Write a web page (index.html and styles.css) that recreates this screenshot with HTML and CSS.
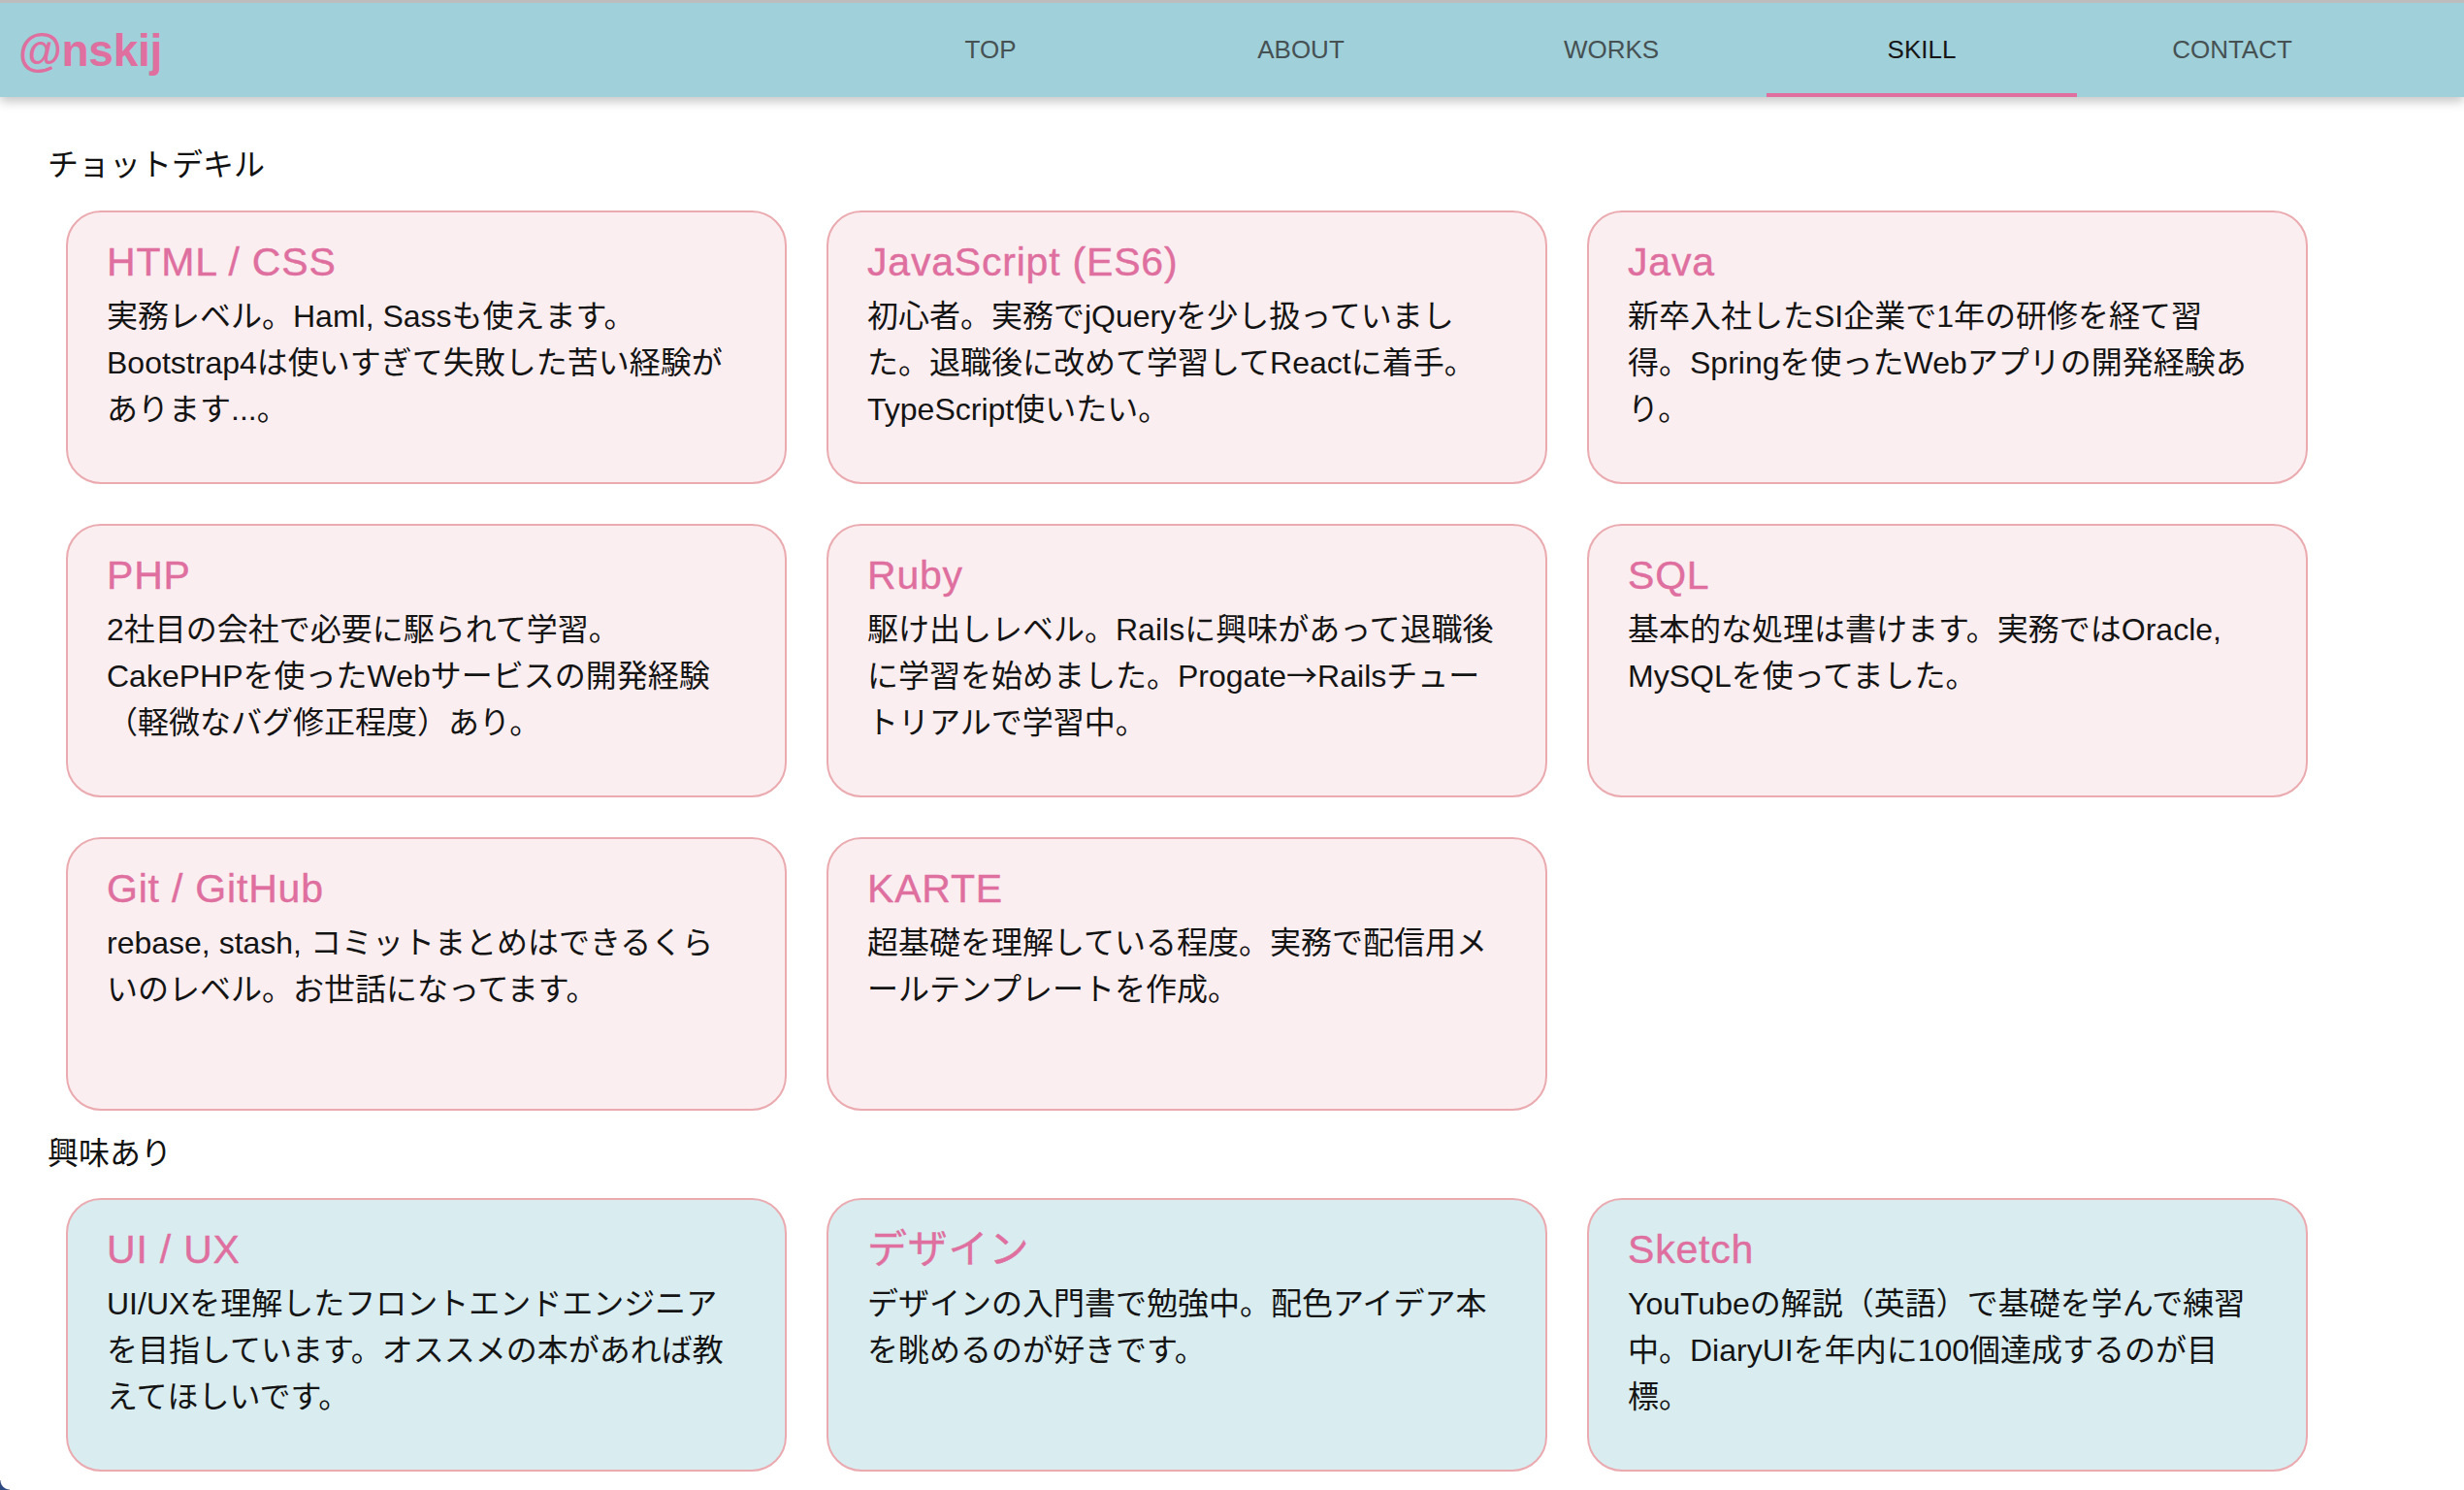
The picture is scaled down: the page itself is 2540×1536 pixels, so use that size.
FILE: index.html
```html
<!DOCTYPE html>
<html lang="ja">
<head>
<meta charset="utf-8">
<title>@nskij - SKILL</title>
<link rel="stylesheet" href="styles.css">
</head>
<body>
<header class="header">
  <div class="logo">@nskij</div>
  <nav class="nav">
    <a class="nav-item">TOP</a>
    <a class="nav-item">ABOUT</a>
    <a class="nav-item">WORKS</a>
    <a class="nav-item active">SKILL</a>
    <a class="nav-item">CONTACT</a>
  </nav>
</header>
<main class="main">
  <h2 class="label">チョットデキル</h2>
  <div class="grid">
    <div class="card">
      <h3 class="card-title">HTML / CSS</h3>
      <p class="card-text">実務レベル。Haml, Sassも使えます。<br>Bootstrap4は使いすぎて失敗した苦い経験が<br>あります...。</p>
    </div>
    <div class="card">
      <h3 class="card-title">JavaScript (ES6)</h3>
      <p class="card-text">初心者。実務でjQueryを少し扱っていまし<br>た。退職後に改めて学習してReactに着手。<br>TypeScript使いたい。</p>
    </div>
    <div class="card">
      <h3 class="card-title">Java</h3>
      <p class="card-text">新卒入社したSI企業で1年の研修を経て習<br>得。Springを使ったWebアプリの開発経験あ<br>り。</p>
    </div>
    <div class="card">
      <h3 class="card-title">PHP</h3>
      <p class="card-text">2社目の会社で必要に駆られて学習。<br>CakePHPを使ったWebサービスの開発経験<br>（軽微なバグ修正程度）あり。</p>
    </div>
    <div class="card">
      <h3 class="card-title">Ruby</h3>
      <p class="card-text">駆け出しレベル。Railsに興味があって退職後<br>に学習を始めました。Progate<span class="cjk">→</span>Railsチュー<br>トリアルで学習中。</p>
    </div>
    <div class="card">
      <h3 class="card-title">SQL</h3>
      <p class="card-text">基本的な処理は書けます。実務ではOracle,<br>MySQLを使ってました。</p>
    </div>
    <div class="card">
      <h3 class="card-title">Git / GitHub</h3>
      <p class="card-text">rebase, stash, コミットまとめはできるくら<br>いのレベル。お世話になってます。</p>
    </div>
    <div class="card">
      <h3 class="card-title">KARTE</h3>
      <p class="card-text">超基礎を理解している程度。実務で配信用メ<br>ールテンプレートを作成。</p>
    </div>
  </div>
  <h2 class="label second">興味あり</h2>
  <div class="grid">
    <div class="card interest">
      <h3 class="card-title">UI / UX</h3>
      <p class="card-text">UI/UXを理解したフロントエンドエンジニア<br>を目指しています。オススメの本があれば教<br>えてほしいです。</p>
    </div>
    <div class="card interest">
      <h3 class="card-title">デザイン</h3>
      <p class="card-text">デザインの入門書で勉強中。配色アイデア本<br>を眺めるのが好きです。</p>
    </div>
    <div class="card interest">
      <h3 class="card-title">Sketch</h3>
      <p class="card-text">YouTubeの解説（英語）で基礎を学んで練習<br>中。DiaryUIを年内に100個達成するのが目<br>標。</p>
    </div>
  </div>
</main>
<div class="window-corner"></div>
</body>
</html>
```
FILE: styles.css
```css
* {
  box-sizing: border-box;
}

html,
body {
  margin: 0;
  padding: 0;
}

body {
  width: 2540px;
  height: 1536px;
  overflow: hidden;
  position: relative;
  background: #ffffff;
  border-top: 3px solid #bdbdbd;
  font-family: "Liberation Sans", "Noto Sans CJK JP", sans-serif;
  color: #141414;
}

.header {
  position: relative;
  z-index: 1;
  display: flex;
  align-items: center;
  height: 97px;
  background: #a0d0da;
  box-shadow: 0 5px 10px rgba(0, 0, 0, 0.22);
}

.logo {
  margin-left: 19px;
  font-size: 46px;
  font-weight: bold;
  letter-spacing: -0.3px;
  color: #de6f9f;
}

.nav {
  display: flex;
  height: 100%;
  margin-left: auto;
  margin-right: 79px;
}

.nav-item {
  position: relative;
  display: flex;
  align-items: center;
  justify-content: center;
  width: 320px;
  font-size: 26px;
  color: #465153;
}

.nav-item.active {
  color: #161616;
}

.nav-item.active::after {
  content: "";
  position: absolute;
  left: 0;
  right: 0;
  bottom: 0;
  height: 4px;
  background: #de6f9f;
}

.main {
  padding: 46px 0 0 49px;
}

.label {
  margin: 0 0 23px;
  font-size: 32px;
  line-height: 48px;
  font-weight: normal;
  color: #111111;
}

.label.second {
  margin-top: 20px;
  margin-bottom: 22px;
}

.grid {
  display: grid;
  grid-template-columns: repeat(3, 743px);
  gap: 41px;
  margin-left: 19px;
}

.card {
  height: 282px;
  padding: 27px 40px 0;
  border: 2px solid #eaaaaf;
  border-radius: 36px;
  background: #fbeef0;
}

.card.interest {
  background: #d9ecf0;
}

.card-title {
  margin: 0;
  font-size: 41px;
  line-height: 48px;
  font-weight: normal;
  letter-spacing: 0.8px;
  color: #de6f9f;
  -webkit-text-stroke: 0.4px #de6f9f;
}

.card-text {
  margin: 8px 0 0;
  font-size: 32px;
  line-height: 48px;
  white-space: nowrap;
  color: #141414;
}

.cjk {
  font-family: "Noto Sans CJK JP", sans-serif;
  line-height: 1;
}

.window-corner {
  position: absolute;
  left: 0;
  top: 1523px;
  width: 10px;
  height: 10px;
  background: radial-gradient(circle at 10px 0, #ffffff 9px, #2c4a7e 10px);
}
```
